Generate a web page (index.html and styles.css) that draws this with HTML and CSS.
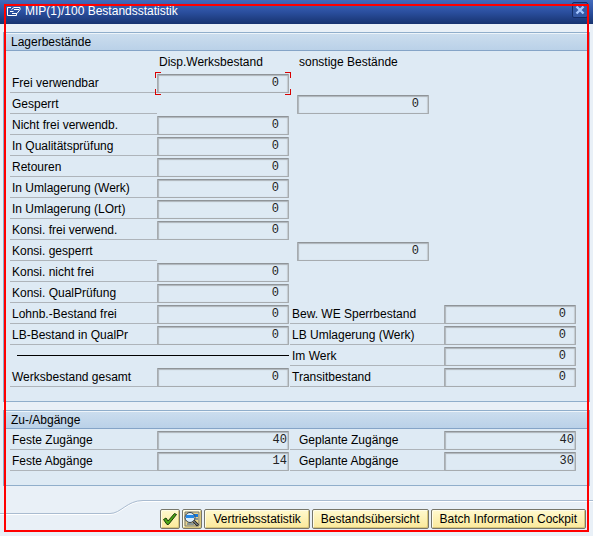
FILE: index.html
```html
<!DOCTYPE html>
<html lang="de">
<head>
<meta charset="utf-8">
<title>MIP(1)/100 Bestandsstatistik</title>
<link rel="stylesheet" href="styles.css">
</head>
<body>
<div class="dialog">
  <header class="titlebar">
    <svg class="title-icon" width="14" height="11" viewBox="0 0 14 11" fill="none" stroke="#fff" aria-hidden="true">
      <path d="M4 1.5H.5V9.5H9.5V8M3 5.5H6.5M5 7.5H10L13 3.5V1.5H7L4.5 3.5M7 3.5H12"/>
    </svg>
    <h1>MIP(1)/100 Bestandsstatistik</h1>
    <button class="close" type="button" aria-label="Schließen">
      <svg width="10" height="10" viewBox="0 0 10 10" fill="none" stroke="#a5c6ff" stroke-width="2.4" aria-hidden="true"><path d="M1.5 1.5L8.5 8.5M8.5 1.5L1.5 8.5"/></svg>
    </button>
  </header>
  <main>
    <section class="panel stock">
      <h2>Lagerbestände</h2>
      <div class="rows">
        <div class="row heads"><span class="head-main">Disp.Werksbestand</span><span class="head-other">sonstige Bestände</span></div>
        <div class="row"><label for="a1">Frei verwendbar</label><div class="field focus"><input id="a1" class="qty" value="0" readonly></div></div>
        <div class="row"><label for="a2">Gesperrt</label><div class="field other"><input id="a2" class="qty" value="0" readonly></div></div>
        <div class="row"><label for="a3">Nicht frei verwendb.</label><div class="field"><input id="a3" class="qty" value="0" readonly></div></div>
        <div class="row"><label for="a4">In Qualitätsprüfung</label><div class="field"><input id="a4" class="qty" value="0" readonly></div></div>
        <div class="row"><label for="a5">Retouren</label><div class="field"><input id="a5" class="qty" value="0" readonly></div></div>
        <div class="row"><label for="a6">In Umlagerung (Werk)</label><div class="field"><input id="a6" class="qty" value="0" readonly></div></div>
        <div class="row"><label for="a7">In Umlagerung (LOrt)</label><div class="field"><input id="a7" class="qty" value="0" readonly></div></div>
        <div class="row"><label for="a8">Konsi. frei verwend.</label><div class="field"><input id="a8" class="qty" value="0" readonly></div></div>
        <div class="row"><label for="a9">Konsi. gesperrt</label><div class="field other"><input id="a9" class="qty" value="0" readonly></div></div>
        <div class="row"><label for="a10">Konsi. nicht frei</label><div class="field"><input id="a10" class="qty" value="0" readonly></div></div>
        <div class="row"><label for="a11">Konsi. QualPrüfung</label><div class="field"><input id="a11" class="qty" value="0" readonly></div></div>
        <div class="row"><label for="a12">Lohnb.-Bestand frei</label><div class="field"><input id="a12" class="qty" value="0" readonly></div><label class="second" for="b12">Bew. WE Sperrbestand</label><div class="field"><input id="b12" class="qty" value="0" readonly></div></div>
        <div class="row"><label for="a13">LB-Bestand in QualPr</label><div class="field"><input id="a13" class="qty" value="0" readonly></div><label class="second" for="b13">LB Umlagerung (Werk)</label><div class="field"><input id="b13" class="qty" value="0" readonly></div></div>
        <div class="row"><hr><label class="second" for="b14">Im Werk</label><div class="field"><input id="b14" class="qty" value="0" readonly></div></div>
        <div class="row"><label for="a15">Werksbestand gesamt</label><div class="field"><input id="a15" class="qty" value="0" readonly></div><label class="second" for="b15">Transitbestand</label><div class="field"><input id="b15" class="qty" value="0" readonly></div></div>
      </div>
    </section>
    <section class="panel moves">
      <h2>Zu-/Abgänge</h2>
      <div class="rows">
        <div class="row"><label for="c1">Feste Zugänge</label><div class="field"><input id="c1" value="40" readonly></div><label class="second inset" for="d1">Geplante Zugänge</label><div class="field"><input id="d1" value="40" readonly></div></div>
        <div class="row"><label for="c2">Feste Abgänge</label><div class="field"><input id="c2" value="14" readonly></div><label class="second inset" for="d2">Geplante Abgänge</label><div class="field"><input id="d2" value="30" readonly></div></div>
      </div>
    </section>
  </main>
  <footer>
    <div class="swoosh">
      <svg width="144" height="16" viewBox="0 0 144 16" fill="none" aria-hidden="true"><path d="M0 14.5H110C121 14.5 127 1.5 143 1.5H144" stroke="#fff"/><path d="M0 13.5H110C121 13.5 127 .5 143 .5H144" stroke="#a9bbd0"/></svg>
      <span class="swoosh-line"></span>
    </div>
    <div class="buttons">
      <button class="btn icon" type="button" aria-label="Weiter"><svg width="16" height="16" viewBox="0 0 16 16" aria-hidden="true"><path d="M1.5 8.5L4 7L6 10L12.5 2.5L14.5 3.5L6.5 13.5H5Z" fill="#4ca516" stroke="#183d08"/></svg></button>
      <button class="btn icon" type="button" aria-label="Detail"><svg width="18" height="16" viewBox="0 0 18 16" aria-hidden="true"><path d="M2 1H16V15H2Z" fill="#e9d58c" stroke="#777"/><path d="M9 3H15V6H9Z" fill="#1677dc"/><path d="M10 8H15M4 13H11" stroke="#315b99"/><circle cx="7" cy="6.5" r="5" fill="#dcedf9" stroke="#343d48"/><path d="M3 4H11V7H3Z" fill="#2388e8"/><path d="M10.5 10L15 14.5" stroke="#222" stroke-width="3"/><path d="M10.5 10L14.5 14" stroke="#b5bfca"/></svg></button>
      <button class="btn" type="button">Vertriebsstatistik</button>
      <button class="btn" type="button">Bestandsübersicht</button>
      <button class="btn" type="button">Batch Information Cockpit</button>
    </div>
  </footer>
  <div class="marker"></div>
</div>
</body>
</html>
```
FILE: styles.css
```css
* { box-sizing: border-box; }
body { margin: 0; background: #e9f0f7; color: #000; font: 12px/18px "Liberation Sans", Arial, sans-serif; }
button, input { font: inherit; color: inherit; }
h1, h2 { margin: 0; font-size: 12px; font-weight: normal; }
.dialog { position: relative; min-height: 100vh; padding-bottom: 7px; }

.titlebar { display: flex; height: 24px; padding: 2px 5px 0 7px; gap: 4px; color: #fff; background: linear-gradient(#426abc, #2b4f9f 50%, #17336f); }
.title-icon { margin-top: 4px; }
.titlebar h1 { flex: 1; }
.close { display: flex; align-items: center; justify-content: center; width: 16px; height: 16px; padding: 0; border: 1px solid #142e68; border-radius: 2px; background: #3459a6; }

main { padding: 8px 3px 0; }
.panel { border: 1px solid #90aecb; background: #deeaf4; }
.panel + .panel { margin-top: 8px; }
.panel h2 { height: 18px; padding-left: 7px; line-height: 16px; border-top: 1px solid #edf4fa; border-bottom: 1px solid #85a4c7; background: linear-gradient(#cbddee, #bad1e8); }
.rows { display: grid; gap: 2px; padding: 2px 13px 14px 6px; }
.row { display: grid; grid-template-columns: 147fr 132fr 1px 154fr 132fr; height: 19px; }
.row label { grid-column: 1; padding: 1px 0 0 2px; line-height: 17px; border-bottom: 1px solid #aeb4ba; white-space: nowrap; }
.row .second { grid-column: 4; }
.row .inset { padding-left: 9px; }
.heads { height: 20px; line-height: 20px; }
.head-main { grid-column: 2; padding-left: 2px; }
.head-other { grid-column: 4; padding-left: 9px; }
.stock h2 + .rows { padding-top: 1px; }
.field { position: relative; min-width: 0; }
.other { grid-column: 4; margin: 0 15px 0 7px; }
.field input { display: block; width: 100%; height: 19px; padding: 1px 1px 2px; border: 1px solid #a6abaf; border-top-color: #8f9498; border-radius: 1px; outline: 0; background: #deeaf4; box-shadow: inset 1px 1px 1px #adb4ba, inset -1px 0 1px #c3cad0; color: #222; font: 12px/14px "Liberation Mono", monospace; text-align: right; }
.field .qty { padding-right: 9px; }
.focus::after { content: ""; position: absolute; inset: -2px; pointer-events: none; --r: #d80000; background:
  linear-gradient(var(--r), var(--r)) 0 0 / 6px 1px, linear-gradient(var(--r), var(--r)) 0 0 / 1px 6px,
  linear-gradient(var(--r), var(--r)) 100% 0 / 6px 1px, linear-gradient(var(--r), var(--r)) 100% 0 / 1px 6px,
  linear-gradient(var(--r), var(--r)) 0 100% / 6px 1px, linear-gradient(var(--r), var(--r)) 0 100% / 1px 6px,
  linear-gradient(var(--r), var(--r)) 100% 100% / 6px 1px, linear-gradient(var(--r), var(--r)) 100% 100% / 1px 6px;
  background-repeat: no-repeat; }
hr { grid-column: 1 / 3; width: auto; height: 1px; margin: 8px 0 0 7px; border: 0; background: #000; }

footer { padding-top: 14px; }
.swoosh { display: flex; height: 9px; }
.swoosh svg { flex: none; overflow: visible; }
.swoosh-line { flex: 1; height: 2px; border-top: 1px solid #a9bbd0; border-bottom: 1px solid #fff; }
.buttons { display: flex; justify-content: flex-end; gap: 2px; padding-right: 7px; }
.btn { height: 20px; padding: 0 8px; border: 1px solid #77766a; border-radius: 2px; background: linear-gradient(#fff9cf, #fbe99a); box-shadow: inset 1px 1px #fffce6, inset -1px -1px #d8c67b; line-height: 18px; white-space: nowrap; }
.icon { display: flex; align-items: center; justify-content: center; width: 20px; padding: 0; }
.marker { position: absolute; inset: 4px; border: 2px solid #f00; pointer-events: none; }
```
